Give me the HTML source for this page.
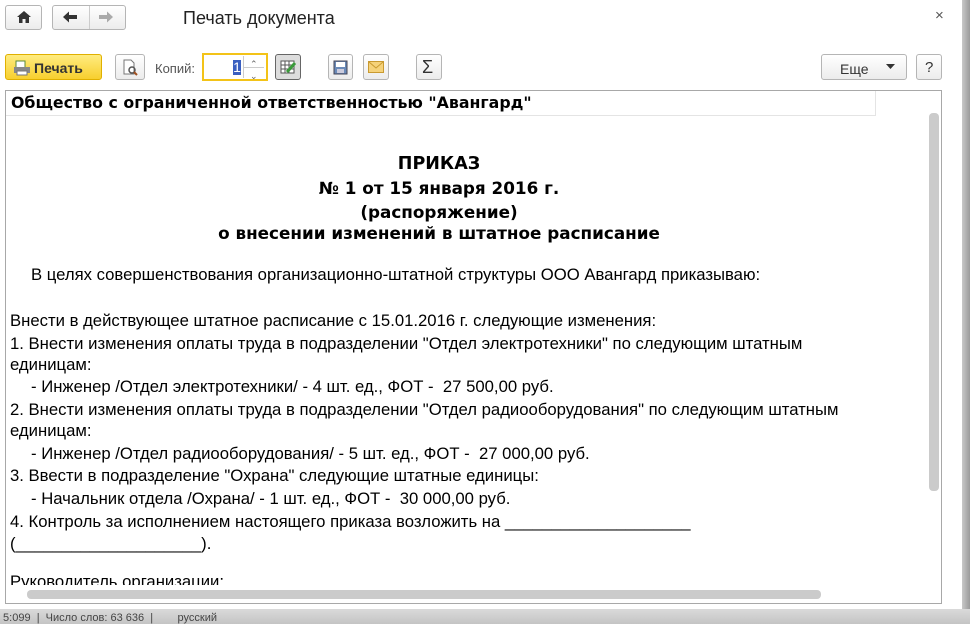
<!DOCTYPE html>
<html><head><meta charset="utf-8"><style>
*{margin:0;padding:0;box-sizing:border-box}
body{width:970px;height:624px;overflow:hidden;background:#fff;font-family:"Liberation Sans",Arial,sans-serif;position:relative}
.a{position:absolute}
.btn{position:absolute;border:1px solid #b5b5b5;border-radius:3px;background:linear-gradient(#fff,#ececec)}
.t{position:absolute;white-space:nowrap;font-size:16.7px;color:#000;line-height:20px}
.h{position:absolute;white-space:nowrap;font-family:"DejaVu Sans",Verdana,sans-serif;font-weight:bold;font-size:16.8px;line-height:20px;left:0;width:866px;text-align:center}
</style></head><body>
<div class="btn" style="left:5px;top:5px;width:37px;height:25px"></div>
<svg class="a" style="left:16px;top:10px" width="16" height="14"><path d="M8 1 L1 7 H3 V13 H6.5 V9 H9.5 V13 H13 V7 H15 Z" fill="#333"/></svg>
<div class="btn" style="left:52px;top:5px;width:74px;height:25px"></div>
<div class="a" style="left:89px;top:6px;width:1px;height:23px;background:#ccc"></div>
<svg class="a" style="left:62px;top:10px" width="16" height="14"><path d="M1 7 L7 1.5 V5 H15 V9 H7 V12.5 Z" fill="#333"/></svg>
<svg class="a" style="left:98px;top:10px" width="16" height="14"><path d="M15 7 L9 1.5 V5 H1 V9 H9 V12.5 Z" fill="#aaa"/></svg>
<div class="t" style="left:183px;top:8px;font-size:18px;color:#222">Печать документа</div>
<div class="t" style="left:935px;top:6px;font-size:15px;color:#555">×</div>
<div class="a" style="left:5px;top:54px;width:97px;height:26px;border:1px solid #e0b000;border-radius:3px;background:linear-gradient(#ffec80,#f7cf2e)"></div>
<svg class="a" style="left:13px;top:60px" width="18" height="16"><rect x="3" y="1" width="9" height="7" fill="#fff" stroke="#5a8a3a"/><rect x="1" y="7" width="16" height="6" fill="#888"/><rect x="4" y="11" width="10" height="4" fill="#fff" stroke="#777"/></svg>
<div class="t" style="left:34px;top:58px;font-size:14px;font-weight:bold;color:#333">Печать</div>
<div class="btn" style="left:115px;top:54px;width:30px;height:26px"></div>
<svg class="a" style="left:121px;top:59px" width="18" height="17"><path d="M3 1 H10 L13 4 V15 H3 Z" fill="#fff" stroke="#777"/><circle cx="11" cy="11" r="3" fill="none" stroke="#555" stroke-width="1.5"/><path d="M13 13 L16 16" stroke="#a05020" stroke-width="2"/></svg>
<div class="t" style="left:155px;top:59px;font-size:13px;color:#555">Копий:</div>
<div class="a" style="left:202px;top:53px;width:66px;height:28px;border:2px solid #f3c318;background:#fff"></div>
<div class="a" style="left:233px;top:60px;width:8px;height:15px;background:#3a5fc0;color:#fff;font-size:14px;line-height:15px;text-align:center">1</div>
<div class="a" style="left:243px;top:56px;width:1px;height:22px;background:#ccc"></div>
<div class="a" style="left:244px;top:67px;width:20px;height:1px;background:#ccc"></div>
<div class="t" style="left:250px;top:54px;font-size:9px;color:#666">⌃</div>
<div class="t" style="left:250px;top:66px;font-size:9px;color:#666">⌄</div>
<div class="a" style="left:275px;top:54px;width:26px;height:26px;border:1px solid #666;border-radius:3px;background:#ddd"></div>
<svg class="a" style="left:280px;top:59px" width="17" height="16"><rect x="1" y="2" width="13" height="12" fill="#fff" stroke="#555"/><path d="M1 6H14M1 10H14M5 2V14M9 2V14" stroke="#555"/><path d="M7 13 L15 4" stroke="#3a9a3a" stroke-width="3"/></svg>
<div class="btn" style="left:328px;top:54px;width:25px;height:26px"></div>
<svg class="a" style="left:333px;top:60px" width="15" height="15"><rect x="1" y="1" width="13" height="13" fill="#6a8ab8" stroke="#445"/><rect x="3" y="2" width="9" height="5" fill="#fff"/><rect x="4" y="9" width="7" height="4" fill="#ccd"/></svg>
<div class="btn" style="left:363px;top:54px;width:26px;height:26px"></div>
<svg class="a" style="left:368px;top:61px" width="16" height="12"><rect x="0.5" y="0.5" width="15" height="11" fill="#f5d27a" stroke="#c99a30"/><path d="M1 1 L8 7 L15 1" fill="none" stroke="#c99a30"/></svg>
<div class="btn" style="left:416px;top:54px;width:26px;height:26px"></div>
<div class="t" style="left:422px;top:57px;font-size:18px;color:#333">Σ</div>
<div class="btn" style="left:821px;top:54px;width:86px;height:26px"></div>
<div class="t" style="left:840px;top:59px;font-size:14px;color:#333">Еще</div>
<svg class="a" style="left:886px;top:64px" width="9" height="5"><path d="M0 0H9L4.5 5Z" fill="#333"/></svg>
<div class="btn" style="left:916px;top:54px;width:26px;height:26px"></div>
<div class="t" style="left:925px;top:58px;font-size:15px;color:#333">?</div>
<div class="a" style="left:5px;top:90px;width:937px;height:514px;border:1px solid #a8a8a8;background:#fff;overflow:hidden">
  <div class="a" style="left:0;top:0;width:870px;height:25px;border-right:1px solid #e4e4e4;border-bottom:1px solid #e4e4e4"></div>
  <div class="t" style="left:5px;top:2px;font-family:'DejaVu Sans',Verdana,sans-serif;font-weight:bold;font-size:15.8px">Общество с ограниченной ответственностью "Авангард"</div>
  <div class="h" style="top:63px;font-size:17.5px">ПРИКАЗ</div>
  <div class="h" style="top:87px">№ 1 от 15 января 2016 г.</div>
  <div class="h" style="top:111px">(распоряжение)</div>
  <div class="h" style="top:132px">о внесении изменений в штатное расписание</div>
  <div class="t" style="left:25px;top:174px">В целях совершенствования организационно-штатной структуры ООО Авангард приказываю:</div>
  <div class="t" style="left:4px;top:220px">Внести в действующее штатное расписание с 15.01.2016 г. следующие изменения:</div>
  <div class="t" style="left:4px;top:243px">1. Внести изменения оплаты труда в подразделении "Отдел электротехники" по следующим штатным</div>
  <div class="t" style="left:4px;top:264px">единицам:</div>
  <div class="t" style="left:25px;top:286px">- Инженер /Отдел электротехники/ - 4 шт. ед., ФОТ -&nbsp; 27 500,00 руб.</div>
  <div class="t" style="left:4px;top:309px">2. Внести изменения оплаты труда в подразделении "Отдел радиооборудования" по следующим штатным</div>
  <div class="t" style="left:4px;top:330px">единицам:</div>
  <div class="t" style="left:25px;top:353px">- Инженер /Отдел радиооборудования/ - 5 шт. ед., ФОТ -&nbsp; 27 000,00 руб.</div>
  <div class="t" style="left:4px;top:375px">3. Ввести в подразделение "Охрана" следующие штатные единицы:</div>
  <div class="t" style="left:25px;top:398px">- Начальник отдела /Охрана/ - 1 шт. ед., ФОТ -&nbsp; 30 000,00 руб.</div>
  <div class="t" style="left:4px;top:421px">4. Контроль за исполнением настоящего приказа возложить на ____________________</div>
  <div class="t" style="left:4px;top:443px">(____________________).</div>
  <div class="t" style="left:4px;top:481px">Руководитель организации:</div>
  <div class="a" style="left:0;top:494px;width:935px;height:20px;background:#fff"></div>
  <div class="a" style="left:21px;top:499px;width:794px;height:9px;border-radius:4px;background:#cbcbcb"></div>
  <div class="a" style="left:923px;top:22px;width:10px;height:378px;border-radius:4px;background:#cbcbcb"></div>
</div>
<div class="a" style="left:962px;top:0;width:8px;height:624px;background:linear-gradient(90deg,#c8c8c8,#9a9a9a)"></div>
<div class="a" style="left:0;top:609px;width:970px;height:15px;background:linear-gradient(#dadada,#c4c4c4)"></div>
<div class="t" style="left:0;top:612px;font-size:11px;color:#444;line-height:12px;height:12px;overflow:hidden">&nbsp;5:099 &nbsp;|&nbsp; Число слов: 63 636 &nbsp;|&nbsp; &nbsp; &nbsp; &nbsp; русский</div>
</body></html>
